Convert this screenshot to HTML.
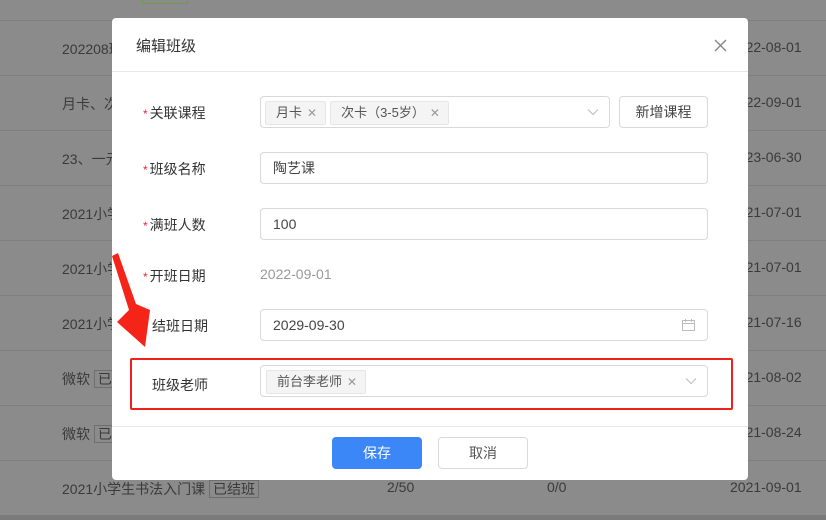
<!DOCTYPE html>
<html><head><meta charset="utf-8"><style>
*{margin:0;padding:0;box-sizing:border-box}
body{width:826px;height:520px;overflow:hidden;background:#8b8b8b;font-family:"Liberation Sans","Noto Sans CJK SC",sans-serif;font-size:14px;color:#333;position:relative}
.row{position:absolute;left:0;width:826px;height:55px;border-top:1px solid #7f7f7f;color:#3a3a3a}
.row span{position:absolute;top:18px}
.modal{position:absolute;left:112px;top:18px;width:636px;height:462px;background:#fff;border-radius:4px}
.hd{height:54px;border-bottom:1px solid #e8e8e8;padding:17px 24px;font-size:15px;color:#333}
.lab{position:absolute;left:31px;font-size:14px;color:#333}
.lab i{color:#f5222d;font-style:normal;margin-right:2px;font-size:12px}
.inp{position:absolute;left:148px;width:448px;height:32px;border:1px solid #d9d9d9;border-radius:4px;padding:0 12px;line-height:30px;color:#444}
.tag{display:inline-block;height:24px;line-height:22px;background:#f4f4f4;border:1px solid #e6e6e6;border-radius:2px;padding:0 8px 0 10px;margin-top:3px;margin-right:4px;color:#555;font-size:13px}
.tag b{font-weight:normal;color:#999;margin-left:5px;font-size:12px}
.ft{position:absolute;left:0;right:0;top:408px;border-top:1px solid #e8e8e8}
.btn{position:absolute;top:419px;height:32px;border-radius:4px;text-align:center;line-height:30px;font-size:14px}
.chev{position:absolute;right:10px;top:11px}
</style></head><body>
<div style="position:absolute;left:142px;top:0;width:46px;height:4px;border:1px solid #6c9a55;border-top:none"></div>
<div class="row" style="top:20px"><span style="left:62px">202208班</span><span style="left:730px">2022-08-01</span></div>
<div class="row" style="top:75px"><span style="left:62px">月卡、次</span><span style="left:730px">2022-09-01</span></div>
<div class="row" style="top:130px"><span style="left:62px">23、一元</span><span style="left:730px">2023-06-30</span></div>
<div class="row" style="top:185px"><span style="left:62px">2021小学</span><span style="left:730px">2021-07-01</span></div>
<div class="row" style="top:240px"><span style="left:62px">2021小学</span><span style="left:730px">2021-07-01</span></div>
<div class="row" style="top:295px"><span style="left:62px">2021小学</span><span style="left:730px">2021-07-16</span></div>
<div class="row" style="top:350px"><span style="left:62px">微软 <em style="font-style:normal;border:1px solid #6f6f6f;padding:0 3px">已</em></span><span style="left:730px">2021-08-02</span></div>
<div class="row" style="top:405px"><span style="left:62px">微软 <em style="font-style:normal;border:1px solid #6f6f6f;padding:0 3px">已</em></span><span style="left:730px">2021-08-24</span></div>
<div class="row" style="top:460px"><span style="left:62px">2021小学生书法入门课 <em style="font-style:normal;border:1px solid #6f6f6f;padding:0 3px">已结班</em></span><span style="left:387px">2/50</span><span style="left:547px">0/0</span><span style="left:730px">2021-09-01</span></div>
<div style="position:absolute;left:0;top:515px;width:826px;height:5px;background:#7a7a7a"></div>

<div class="modal">
<div class="hd">编辑班级</div>
<svg style="position:absolute;left:602px;top:21px" width="13" height="13" viewBox="0 0 13 13"><path d="M1 1L12 12M12 1L1 12" stroke="#888" stroke-width="1.4"/></svg>
<div class="lab" style="top:85px"><i>*</i>关联课程</div>
<div class="inp" style="top:78px;width:350px;padding-left:4px"><span class="tag">月卡<b>✕</b></span><span class="tag">次卡（3-5岁）<b>✕</b></span><svg class="chev" width="12" height="8" viewBox="0 0 12 8"><path d="M1 1.5L6 6.5L11 1.5" fill="none" stroke="#bbb"/></svg></div>
<div class="inp" style="top:78px;left:507px;width:89px;text-align:center;padding:0">新增课程</div>
<div class="lab" style="top:141px"><i>*</i>班级名称</div>
<div class="inp" style="top:134px">陶艺课</div>
<div class="lab" style="top:197px"><i>*</i>满班人数</div>
<div class="inp" style="top:190px">100</div>
<div class="lab" style="top:248px"><i>*</i>开班日期</div>
<div style="position:absolute;left:148px;top:248px;color:#999">2022-09-01</div>
<div class="lab" style="top:298px;left:40px">结班日期</div>
<div class="inp" style="top:291px">2029-09-30<svg style="position:absolute;right:12px;top:9px" width="13" height="12" viewBox="0 0 13 12"><rect x="0.5" y="1.5" width="12" height="10" fill="none" stroke="#bbb"/><line x1="0.5" y1="4.5" x2="12.5" y2="4.5" stroke="#bbb"/><line x1="3.5" y1="0" x2="3.5" y2="3" stroke="#bbb"/><line x1="9.5" y1="0" x2="9.5" y2="3" stroke="#bbb"/></svg></div>
<div style="position:absolute;left:18px;top:340px;width:603px;height:52px;border:2px solid #f0201a;border-radius:2px"></div>
<div class="lab" style="top:357px;left:40px">班级老师</div>
<div class="inp" style="top:347px;padding-left:5px"><span class="tag">前台李老师<b>✕</b></span><svg class="chev" width="12" height="8" viewBox="0 0 12 8"><path d="M1 1.5L6 6.5L11 1.5" fill="none" stroke="#bbb"/></svg></div>
<div class="ft"></div>
<div class="btn" style="left:220px;width:90px;background:#3b87f7;color:#fff;border:1px solid #3b87f7">保存</div>
<div class="btn" style="left:326px;width:90px;border:1px solid #d9d9d9;color:#555">取消</div>
</div>
<svg style="position:absolute;left:0;top:0" width="826" height="520"><polygon points="112,256 118,253 136,304 150,310 145,347 117,322 129,310" fill="#f52418"/></svg>
</body></html>
